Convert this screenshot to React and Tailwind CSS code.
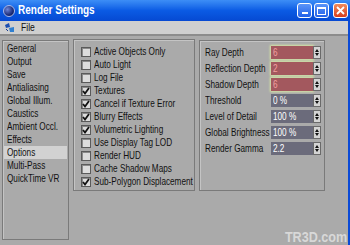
import React from 'react';

const sections = ['General', 'Output', 'Save', 'Antialiasing', 'Global Illum.', 'Caustics', 'Ambient Occl.', 'Effects', 'Options', 'Multi-Pass', 'QuickTime VR'];

const options = [
  ['Active Objects Only', false],
  ['Auto Light', false],
  ['Log File', false],
  ['Textures', true],
  ['Cancel if Texture Error', true],
  ['Blurry Effects', true],
  ['Volumetric Lighting', true],
  ['Use Display Tag LOD', false],
  ['Render HUD', false],
  ['Cache Shadow Maps', false],
  ['Sub-Polygon Displacement', true],
];

const fields = [
  ['Ray Depth', '6', true],
  ['Reflection Depth', '2', true],
  ['Shadow Depth', '6', true],
  ['Threshold', '0 %', false],
  ['Level of Detail', '100 %', false],
  ['Global Brightness', '100 %', false],
  ['Render Gamma', '2.2', false],
];

// the screenshot's text is squeezed sideways, so narrow it
function T({ children }) {
  return <span className="inline-block origin-left scale-x-[0.78] whitespace-nowrap">{children}</span>;
}

function Check({ on }) {
  return (
    <div className="w-[10px] h-[10px] bg-[#dcdcdc] border border-[#5a5a5a] shadow-[inset_1px_1px_0_#8a8a8a] flex items-center justify-center shrink-0">
      {on && (
        <svg width="8" height="8" viewBox="0 0 8 8">
          <path d="M1 4 L3 6.5 L7 1" fill="none" stroke="#111" strokeWidth="1.8" />
        </svg>
      )}
    </div>
  );
}

function Spinner() {
  return (
    <div className="w-[8px] h-[13px] bg-[#d4d4d4] border border-[#6a6a6a] flex flex-col items-center justify-center gap-[1px] shrink-0">
      <svg width="4" height="3" viewBox="0 0 4 3"><path d="M0 3 L2 0 L4 3 Z" fill="#111" /></svg>
      <svg width="4" height="3" viewBox="0 0 4 3"><path d="M0 0 L2 3 L4 0 Z" fill="#111" /></svg>
    </div>
  );
}

export default function App() {
  return (
    <div className="w-[350px] h-[245px] bg-[#aaaaaa] relative overflow-hidden flex flex-col font-['Liberation_Sans',sans-serif] text-[#111]">
      {/* title bar */}
      <div className="h-[21px] shrink-0 bg-gradient-to-b from-[#3d8ef6] via-[#0b5be4] to-[#0649d2] flex items-center pl-[3px] pr-[2px]">
        <div className="w-[12px] h-[12px] rounded-full bg-[radial-gradient(circle_at_35%_35%,#6f86d8,#1c2c78_60%,#0c1440)] border border-[#a8b8e8] shrink-0" />
        <span className="ml-[3px] text-white font-bold text-[12.5px] leading-none inline-block origin-left scale-x-[0.8] whitespace-nowrap">Render Settings</span>
        <div className="ml-auto flex gap-[2px] items-center">
          <div className="w-[15px] h-[15px] rounded-[3px] border border-white bg-gradient-to-b from-[#5c95f8] to-[#2160e8] flex items-end justify-center pb-[3px]">
            <div className="w-[6px] h-[2px] bg-white" />
          </div>
          <div className="w-[15px] h-[15px] rounded-[3px] border border-white bg-gradient-to-b from-[#5c95f8] to-[#2160e8] flex items-center justify-center">
            <div className="w-[9px] h-[8px] border border-white border-t-2" />
          </div>
          <div className="ml-[2px] w-[15px] h-[15px] rounded-[3px] border border-white bg-gradient-to-b from-[#f08a5c] to-[#d83c1c] flex items-center justify-center">
            <svg width="9" height="9" viewBox="0 0 9 9">
              <path d="M1 1 L8 8 M8 1 L1 8" stroke="#fff" strokeWidth="1.8" />
            </svg>
          </div>
        </div>
      </div>

      <div className="flex-1 flex flex-col border-r-2 border-[#0a4ad6]">
        {/* menu bar */}
        <div className="h-[13px] shrink-0 bg-[#cfcfcf] flex items-center pl-[5px] text-[11px]">
          <svg width="10" height="9" viewBox="0 0 10 9">
            <path d="M0 2 L4 0 L5 4 L1 5 Z" fill="#1d4fb0" />
            <path d="M4 5 L9 4 L9 9 L5 9 Z" fill="#2f7fd0" />
            <path d="M1 6 L3 8" stroke="#1a3c90" strokeWidth="1" />
          </svg>
          <span className="ml-[6px] leading-none"><T>File</T></span>
        </div>
        <div className="h-[2px] bg-[#8c8c8c] shrink-0" />

        {/* body */}
        <div className="flex items-start pl-[2px] pt-[4px] text-[10.5px] leading-[13px]">
          <div className="w-[67px] h-[200px] border border-[#7a7a7a] shadow-[inset_1px_1px_0_#c4c4c4] pt-[1px] px-[1px]">
            {sections.map((s) => (
              <div key={s} className={`h-[13px] pl-[3px] ${s === 'Options' ? 'bg-[#d2d2d2]' : ''}`}><T>{s}</T></div>
            ))}
          </div>

          <div className="ml-[4px] -mt-[1px] w-[122px] h-[152px] border border-[#7a7a7a] shadow-[inset_1px_1px_0_#c4c4c4] pt-[5px] pl-[7px]">
            {options.map(([label, on]) => (
              <div key={label} className="h-[13px] flex items-center gap-[3px]">
                <Check on={on} />
                <T>{label}</T>
              </div>
            ))}
          </div>

          <div className="ml-[4px] w-[126px] h-[151px] border border-[#7a7a7a] shadow-[inset_1px_1px_0_#c4c4c4] pt-[5px] pl-[5px] flex flex-col gap-[3px]">
            {fields.map(([label, val, red]) => (
              <div key={label} className="h-[13px] flex items-center">
                <div className="w-[66px] overflow-visible"><T>{label}</T></div>
                <div className={`w-[42px] h-[13px] pl-[2px] flex items-center ${red ? 'bg-[#a3585e] text-[#f2a0a0] shadow-[0_0_2px_1px_#d6e6a4]' : 'bg-[#6b6b7b] text-white'}`}><T>{val}</T></div>
                <Spinner />
              </div>
            ))}
          </div>
        </div>
      </div>

      <div className="absolute right-[3px] bottom-[1px] text-[14px] font-bold text-[#d8d8d8] leading-none inline-block origin-right scale-x-[0.9]">TR3D.com</div>
    </div>
  );
}
